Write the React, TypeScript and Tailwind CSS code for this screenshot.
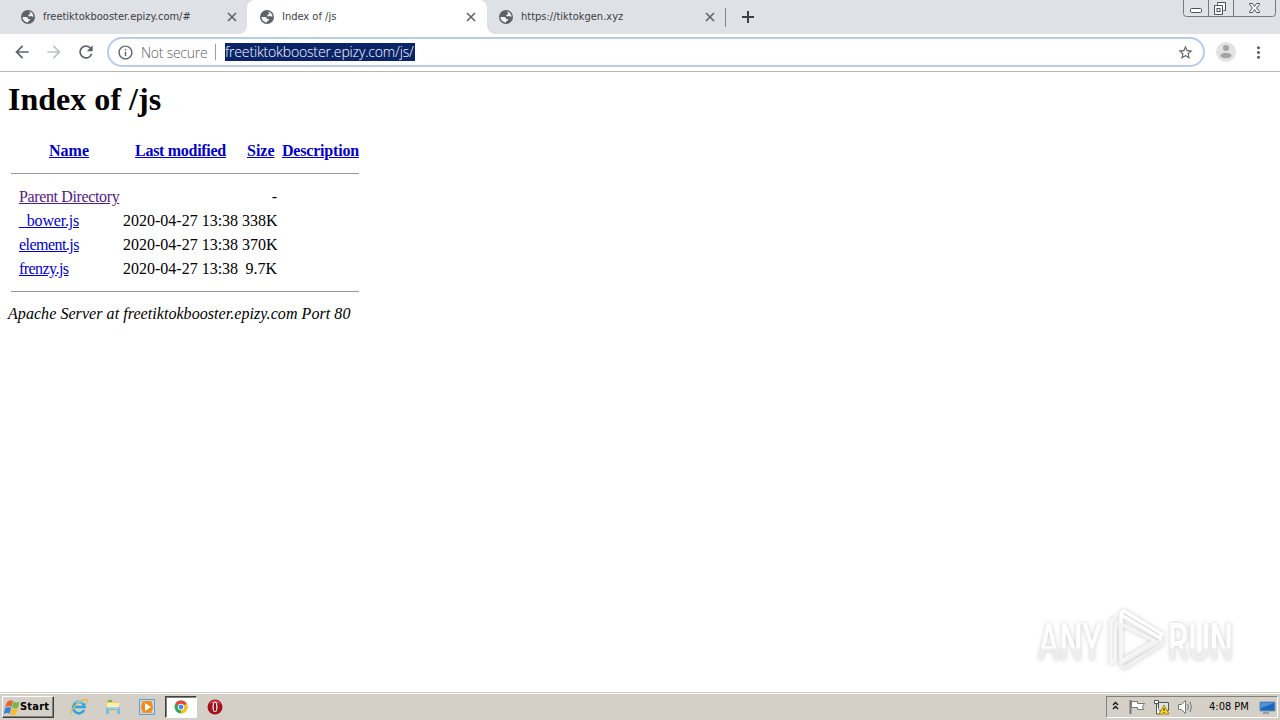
import React from "react"
import {
	MdArrowBack,
	MdArrowForward,
	MdInfoOutline,
	MdMoreVert,
	MdRefresh,
	MdStarBorder,
} from "react-icons/md"

const files = [
	{ name: "_bower.js", date: "2020-04-27 13:38", size: "338K" },
	{ name: "element.js", date: "2020-04-27 13:38", size: "370K" },
	{ name: "frenzy.js", date: "2020-04-27 13:38", size: "9.7K" },
]

function Globe() {
	return (
		<svg width="14" height="14" viewBox="0 0 14 14" className="shrink-0">
			<circle cx="7" cy="7" r="7" fill="#5f6368" />
			<path
				d="M8.300 1.600c2.400.5 4.200 2.600 4.200 5.100-.9.300-1.500-.4-2.200-.6-.8-.2-1.200.5-2.100.4-1-.1-1.100-1.200-.5-1.700.6-.4 1.600-.3 1.600-1 0-.8-1-.7-1-2.200zM1.500 7h3.700c1.100 0 1.900.9 1.900 1.900h1.300c.4 0 .8.400.8.900 0 .8-1.400.7-1.700 1.300-.3.500-.2 1.300-.8 1.300C3.700 12.100 1.500 9.800 1.500 7z"
				fill="#f1f3f4"
			/>
		</svg>
	)
}

function Tab({ title, active = false }: { title: string; active?: boolean }) {
	return (
		<div
			className={
				active
					? "relative -mr-px flex h-[34px] w-[240px] items-center rounded-t-lg bg-white pl-[13px] pr-[9px]"
					: "flex h-[34px] w-[239px] items-center pl-[13px] pr-[8px]"
			}
		>
			<Globe />
			<span className="ml-2 flex-1 pt-px whitespace-nowrap font-['DejaVu_Sans_Condensed','DejaVu_Sans',sans-serif] text-[11px] text-[#3c4043] [font-stretch:condensed]">
				{title}
			</span>
			<svg width="14" height="14" viewBox="0 0 14 14" fill="none" stroke="#5f6368" strokeWidth="1.600">
				<path d="M3 3l8 8M11 3l-8 8" />
			</svg>
			{active && (
				<>
					<div className="absolute bottom-0 -left-2 size-2 bg-[radial-gradient(circle_at_0_0,#dee1e6_7.5px,white_8px)]" />
					<div className="absolute bottom-0 -right-2 size-2 bg-[radial-gradient(circle_at_100%_0,#dee1e6_7.5px,white_8px)]" />
				</>
			)}
		</div>
	)
}

function WindowButtons() {
	return (
		<svg width="94" height="18" viewBox="0 0 94 18" fill="none" stroke="#747982">
			<path d="M.5 0v13.500q0 3 3 3h86q3 0 3-3V0M25.500 0v16M50.500 0v16" fill="#e0e3e8" />
			<g stroke="#4c515a">
				<rect x="7.500" y="8.500" width="11" height="4" rx="1" fill="#fff" />
				<path d="M34.500 4.500v-2h8v8h-2M31.500 5.500h8v9h-8z" fill="#fff" />
				<rect x="34" y="8.500" width="3" height="3" />
				<path d="M66.500 3.500h3l2 3 2-3h3v1l-3 3.500 3 3.500v1h-3l-2-3-2 3h-3v-1l3-3.500-3-3.500z" fill="#fff" />
			</g>
		</svg>
	)
}

function SortLink({ children }: { children: React.ReactNode }) {
	return (
		<a href="#" className="whitespace-nowrap text-center font-bold text-[#0000cc] underline">
			{children}
		</a>
	)
}

function Watermark() {
	return (
		<svg width="250" height="90" viewBox="0 0 250 90" className="drop-shadow-[0_0_2px_#cccccc]">
			<defs>
				<linearGradient id="fade" x1="0" y1="0" x2="0" y2="1">
					<stop offset="0.59" stopColor="#fff" />
					<stop offset="0.61" stopColor="#eeeeee" />
				</linearGradient>
			</defs>
			<g fill="url(#fade)" fontFamily="Roboto, sans-serif" fontWeight="500" fontSize="51">
				<text x="8" y="69" textLength="64" lengthAdjust="spacingAndGlyphs">ANY</text>
				<text x="138" y="69" textLength="65" lengthAdjust="spacingAndGlyphs">RUN</text>
			</g>
			<g fill="none" strokeWidth="3.500" strokeLinejoin="round" strokeLinecap="round">
				<path d="M85 27l-4 3v42l4-2V38" stroke="#f6f6f6" />
				<path d="M91 73l3 4 38-24v-4L91 72" stroke="#f0f0f0" />
				<path d="M91 65V22l3-2 38 23-2 4-37-22" stroke="#fff" />
				<path d="M91 65V33l34 17-34 20z" stroke="#f5f5f5" />
			</g>
		</svg>
	)
}

function StartFlag() {
	return (
		<svg width="17" height="17" viewBox="0 0 17 17">
			<path d="M4 3q3-3 6-1L8.500 8Q5.500 6 2 8.500z" fill="#ea6331" />
			<path d="M10.500 2.500q3 2 6 0l-1.500 6q-3 2-6 0z" fill="#72b84a" />
			<path d="M2 9.300q3-2.500 6.200-.5l-1.500 6q-3-2-6.200.5z" fill="#3b83d8" />
			<path d="M8.800 9.200q3 2 6 0l-1.500 6q-3 2-6 0z" fill="#f6bd2c" />
		</svg>
	)
}

function Explorer() {
	return (
		<svg width="18" height="18" viewBox="0 0 18 18" fill="none">
			<path d="M14 12A5.700 5.700 0 1 1 14.500 9H5" stroke="#2fa5df" strokeWidth="2.700" />
			<path d="M2 16C-2 13 12-1 17 2q1 1-1 4" stroke="#e8b83d" strokeWidth="1.200" />
			<path d="M5 5q4-3 8 0" stroke="#8ddafa" />
		</svg>
	)
}

function Folder() {
	return (
		<svg width="16" height="16" viewBox="0 0 16 16">
			<path d="M1 2h5l1 1h7v9H1z" fill="#edce6b" />
			<path d="M3 1h4v2H3z" fill="#68b557" />
			<path d="M2 4h12v4H2z" fill="#fff0a9" />
			<path d="M1 8h14v7h-3v-4H4v4H1z" fill="#79bce2" />
			<path d="M2 9h12" stroke="#c7e7f6" />
		</svg>
	)
}

function MediaPlayer() {
	return (
		<svg width="16" height="16" viewBox="0 0 16 16">
			<path d="M.5.5h15v15H.5z" fill="#bddcf2" stroke="#5f9fd0" />
			<path d="M3 2h10v12H3z" fill="#f9a234" />
			<circle cx="8" cy="8" r="6" fill="#f58b16" />
			<path d="M6 4l6 4-6 4z" fill="#fff" />
		</svg>
	)
}

function ChromeIcon() {
	return (
		<svg width="14" height="14" viewBox="0 0 14 14">
			<circle cx="7" cy="7" r="6.500" fill="#35a853" />
			<path d="M7 7L1.370 3.750a6.500 6.500 0 0 1 11.260 0z" fill="#e94335" />
			<path d="M7 7l5.630-3.250A6.500 6.500 0 0 1 7 13.500z" fill="#fbc116" />
			<circle cx="7" cy="7" r="3.200" fill="#fff" />
			<circle cx="7" cy="7" r="2.400" fill="#4688ef" />
		</svg>
	)
}

function Opera() {
	return (
		<svg width="16" height="16" viewBox="0 0 16 16">
			<circle cx="8" cy="8" r="7.500" fill="#a90e1b" />
			<path d="M2 5q6-7 12 0-6-3-12 0" fill="#df6069" />
			<ellipse cx="8" cy="8" rx="2.500" ry="5" fill="#fff" />
			<ellipse cx="8" cy="8" rx="1.300" ry="4.300" fill="#8b101b" />
		</svg>
	)
}

function TrayIcons() {
	return (
		<svg width="86" height="18" viewBox="0 0 86 18" fill="none">
			<path d="M6 7l2.500-2.500L11 7M6 11l2.500-2.500L11 11" stroke="#111" strokeWidth="1.300" />
			<path d="M23.500 2v14" stroke="#777" strokeWidth="2" />
			<path d="M24.500 3.500h6v2h7l-2 3 1 3h-6v-2h-6z" fill="#fff" stroke="#777" />
			<path d="M51.500 4.500h10v8h-10z" fill="#dbe2e8" stroke="#555" />
			<path d="M47.500 2.500h4v3h-4zM49.500 6v10h4" fill="#fff" stroke="#555" />
			<path d="M57 7l5 9H52z" fill="#f9d829" stroke="#a88b0a" />
			<path d="M57 10v3M57 14v1" stroke="#222" />
			<path d="M71.500 6.500h3l4-4v13l-4-4h-3z" fill="#fff" stroke="#777" />
			<path d="M80.500 6q2 3 0 6M83 4q3 5 0 10" stroke="#777" />
		</svg>
	)
}

export default function App() {
	return (
		<div className="flex h-[720px] w-[1280px] flex-col overflow-hidden bg-white">
			{/* Tab strip */}
			<div className="flex h-[34px] shrink-0 bg-[#dee1e6] pl-2">
				<Tab title="freetiktokbooster.epizy.com/#" />
				<Tab title="Index of /js" active />
				<Tab title="https://tiktokgen.xyz" />
				<div className="mt-2 h-[19px] w-px bg-[#80868b]" />
				<svg width="18" height="18" viewBox="0 0 18 18" className="mt-2 ml-[13px]" stroke="#3c4043" strokeWidth="2">
					<path d="M9 3v12M3 9h12" />
				</svg>
				<div className="mr-[3px] ml-auto">
					<WindowButtons />
				</div>
			</div>

			{/* Toolbar */}
			<div className="flex h-[38px] shrink-0 items-center border-b border-[#b6b6b6] pb-px pl-[12px]">
				<MdArrowBack className="size-5 text-[#5f6368]" />
				<MdArrowForward className="ml-[12px] size-5 text-[#bdc1c6]" />
				<MdRefresh className="ml-[12px] size-5 text-[#5f6368]" />
				<div className="ml-[11px] flex h-[30px] w-[1098px] items-center rounded-full border-2 border-[#b6ccea] pr-[9px] pl-[8px] font-['Open_Sans',sans-serif] text-[14px] font-light">
					<MdInfoOutline className="size-[17px] text-[#5f6368]" />
					<span className="ml-[7px] w-[67px] whitespace-nowrap tracking-[-0.25px] text-[#5f6368]">Not secure</span>
					<div className="ml-[7px] h-4 w-px bg-[#9aa0a6]" />
					<span className="ml-[9px] h-[18px] w-[190px] whitespace-nowrap bg-[#0a246a] leading-[17px] tracking-[-0.16px] text-white">
						freetiktokbooster.epizy.com/js/
					</span>
					<MdStarBorder className="ml-auto size-[17px] text-[#5f6368]" />
				</div>
				<svg width="20" height="20" viewBox="0 0 20 20" className="ml-[11px]">
					<circle cx="10" cy="10" r="10" fill="#e2e2e2" />
					<circle cx="10" cy="6" r="3" fill="#a4a4a4" />
					<ellipse cx="10" cy="13.500" rx="5.500" ry="2.800" fill="#a4a4a4" />
				</svg>
				<MdMoreVert className="ml-[13px] size-[19px] text-[#5f6368]" />
			</div>

			{/* Directory listing */}
			<main className="relative flex-1 pt-[9px] font-['Liberation_Serif',serif] text-[16px] leading-6 text-black">
				<h1 className="pl-2 text-[32px] leading-9 font-bold tracking-[0.02px]">Index of /js</h1>
				<div className="mt-[22px] grid grid-cols-[100px_115px_35px_78px] gap-x-1 pl-[19px]">
					<SortLink>Name</SortLink>
					<span className="text-center tracking-[-0.3px]"><SortLink>Last modified</SortLink></span>
					<span className="pl-[5px]"><SortLink>Size</SortLink></span>
					<span className="pl-px tracking-[-0.2px]"><SortLink>Description</SortLink></span>
				</div>
				<hr className="mt-[10px] ml-[11px] w-[348px] border-[#999999]" />
				<div className="mt-[11px] grid grid-cols-[100px_115px_35px] gap-x-1 pl-[19px] whitespace-nowrap">
					<a href="#" className="tracking-[-0.37px] text-[#551a8b] underline">Parent Directory</a>
					<span />
					<span className="text-right">-</span>
					{files.map((file) => (
						<React.Fragment key={file.name}>
							<span className={file.name === "_bower.js" ? "tracking-[-0.2px]" : "tracking-[-0.55px]"}>
								<a href="#" className="text-[#0000cc] underline">{file.name}</a>
							</span>
							<span>{file.date}</span>
							<span className="text-right">{file.size}</span>
						</React.Fragment>
					))}
				</div>
				<hr className="mt-[10px] ml-[11px] w-[348px] border-[#999999]" />
				<address className="mt-[10px] pl-2 tracking-[0.06px]">Apache Server at freetiktokbooster.epizy.com Port 80</address>
				<div className="absolute right-0 bottom-[11px]">
					<Watermark />
				</div>
			</main>

			{/* Taskbar */}
			<div className="flex h-[28px] shrink-0 items-center border-t border-[#d4d0c8] bg-[#d4d0c8] pt-px font-['DejaVu_Sans_Condensed','DejaVu_Sans',sans-serif] text-[11px] text-black shadow-[inset_0_1px_white] [font-stretch:condensed]">
				<div className="ml-[2px] flex h-[22px] w-[52px] items-center border border-t-white border-r-[#404040] border-b-[#404040] border-l-white font-bold shadow-[inset_-1px_-1px_#808080]">
					<StartFlag />
					<span className="tracking-[0.2px]">Start</span>
				</div>
				<div className="ml-[16px] flex items-center">
					<Explorer />
					<div className="ml-[17px]"><Folder /></div>
					<div className="ml-[18px]"><MediaPlayer /></div>
					<div className="ml-[10px] flex h-[22px] w-[32px] items-center justify-center border border-t-[#404040] border-r-white border-b-white border-l-[#404040] bg-white shadow-[inset_1px_1px_#808080]">
						<ChromeIcon />
					</div>
					<div className="ml-[10px]"><Opera /></div>
				</div>
				<div className="mr-[2px] ml-auto flex h-[22px] w-[172px] items-center border border-t-[#808080] border-r-white border-b-white border-l-[#808080]">
					<TrayIcons />
					<span className="ml-[16px] w-[41px] whitespace-nowrap pt-px">4:08 PM</span>
					<svg width="17" height="15" viewBox="0 0 17 15" className="ml-[9px]">
						<path d="M1 2h15v9H1z" fill="#1c67bd" stroke="#7595b5" />
						<path d="M2 3h13L2 8z" fill="#4a96df" />
						<path d="M4 13h6" stroke="#526c82" />
					</svg>
				</div>
			</div>
		</div>
	)
}
